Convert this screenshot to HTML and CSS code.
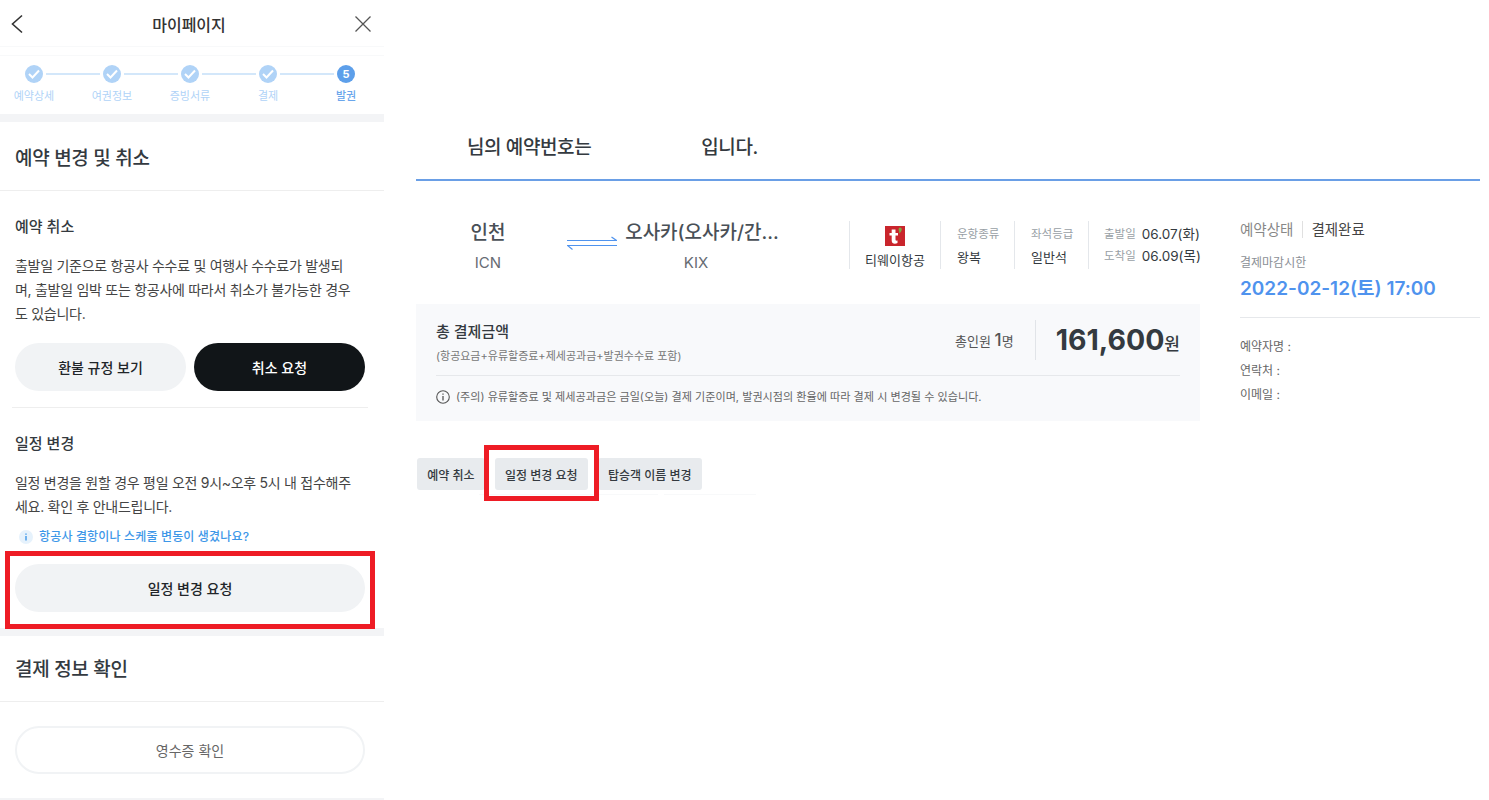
FILE: index.html
```html
<!DOCTYPE html>
<html lang="ko">
<head>
  <meta charset="UTF-8" />
  <title>마이페이지</title>
  <link rel="stylesheet" href="styles.css">
</head>
<body>
  <div class="page">

    <!-- 모바일 마이페이지 -->
    <aside class="mobile">
      <header class="top">
        <svg class="top-icon" width="14" height="20" viewBox="0 0 14 20"><path d="M12 1.500 2.500 10l9.500 8.500" fill="none" stroke="#333" stroke-width="1.600"/></svg>
        <h1>마이페이지</h1>
        <svg class="top-icon" width="18" height="18" viewBox="0 0 18 18"><path d="M1.500 1.500l15 15M16.500 1.500l-15 15" fill="none" stroke="#555" stroke-width="1.300"/></svg>
      </header>

      <ol class="steps">
        <li class="step"><span class="dot"><svg width="12" height="10" viewBox="0 0 12 10"><path d="M1 5l3.500 3.500L11 1.500" fill="none" stroke="#fff" stroke-width="2"/></svg></span><span class="step-name">예약상세</span></li>
        <li class="step"><span class="dot"><svg width="12" height="10" viewBox="0 0 12 10"><path d="M1 5l3.500 3.500L11 1.500" fill="none" stroke="#fff" stroke-width="2"/></svg></span><span class="step-name">여권정보</span></li>
        <li class="step"><span class="dot"><svg width="12" height="10" viewBox="0 0 12 10"><path d="M1 5l3.500 3.500L11 1.500" fill="none" stroke="#fff" stroke-width="2"/></svg></span><span class="step-name">증빙서류</span></li>
        <li class="step"><span class="dot"><svg width="12" height="10" viewBox="0 0 12 10"><path d="M1 5l3.500 3.500L11 1.500" fill="none" stroke="#fff" stroke-width="2"/></svg></span><span class="step-name">결제</span></li>
        <li class="step step-now"><span class="dot">5</span><span class="step-name">발권</span></li>
      </ol>

      <h2 class="block-title">예약 변경 및 취소</h2>

      <section class="block">
        <h3>예약 취소</h3>
        <p>출발일 기준으로 항공사 수수료 및 여행사 수수료가 발생되며, 출발일 임박 또는 항공사에 따라서 취소가 불가능한 경우도 있습니다.</p>
        <div class="btn-row">
          <button class="btn">환불 규정 보기</button>
          <button class="btn btn-dark">취소 요청</button>
        </div>
      </section>

      <section class="block block-change">
        <h3>일정 변경</h3>
        <p>일정 변경을 원할 경우 평일 오전 9시~오후 5시 내 접수해주세요. 확인 후 안내드립니다.</p>
        <div class="notice">
          <svg width="16" height="16" viewBox="0 0 16 16"><circle cx="8" cy="8" r="7" fill="#e6f2fc"/><path d="M8 7v4.500M8 4.500v1.200" stroke="#3d97e8" stroke-width="1.400"/></svg>
          항공사 결항이나 스케줄 변동이 생겼나요?
        </div>
        <button class="btn btn-wide">일정 변경 요청</button>
        <span class="mark mark-side"></span>
      </section>

      <h2 class="block-title block-title-pay">결제 정보 확인</h2>
      <div class="receipt">
        <button class="btn btn-line">영수증 확인</button>
      </div>
    </aside>

    <!-- 예약 상세 -->
    <main class="detail">
      <div class="booking-no">
        <span>님의 예약번호는</span>
        <span>입니다.</span>
      </div>

      <div class="columns">
        <div class="col-main">
          <div class="trip">
            <div class="city city-from"><strong>인천</strong><span>ICN</span></div>
            <svg class="arrows" width="50" height="16" viewBox="0 0 50 16"><path d="M0 4.500h49.500l-5-3.500M50 9.500H.5l5 4" fill="none" stroke="#4f93ee" stroke-width="1.200"/></svg>
            <div class="city city-to"><strong>오사카(오사카/간...</strong><span>KIX</span></div>
            <div class="cell cell-air">
              <svg width="20" height="20" viewBox="0 0 20 20"><rect width="20" height="20" fill="#c9252c"/><path d="M12.500 17c-2.800 1.300-5.800.7-5.800-2.500V9.500H4.500V7h2.200V3.500h3.800V7H13v2.500h-2.500v4c0 1.200 1 1.300 2 1z" fill="#fff"/><path d="M15 1.500c2.500 0 2.500 4-1 6 .8-2-.4-2.500-.4-4 0-1.200.6-2 1.400-2z" fill="#7fa843"/></svg>
              <span class="air-name">티웨이항공</span>
            </div>
            <div class="cell cell-info"><em>운항종류</em><span>왕복</span></div>
            <div class="cell cell-info"><em>좌석등급</em><span>일반석</span></div>
            <div class="cell cell-date">
              <div><em>출발일</em><span>06.07(화)</span></div>
              <div><em>도착일</em><span>06.09(목)</span></div>
            </div>
          </div>

          <div class="pay">
            <div class="pay-top">
              <div class="pay-label">
                <strong>총 결제금액</strong>
                <span>(항공요금+유류할증료+제세공과금+발권수수료 포함)</span>
              </div>
              <div class="pay-count">총인원 <b>1</b>명</div>
              <div class="pay-sum"><b>161,600</b>원</div>
            </div>
            <div class="pay-note">
              <svg width="14" height="14" viewBox="0 0 14 14"><circle cx="7" cy="7" r="6.300" fill="none" stroke="#555" stroke-width="1.100"/><path d="M7 6v4.500M7 3.400v1.400" stroke="#555" stroke-width="1.300"/></svg>
              (주의) 유류할증료 및 제세공과금은 금일(오늘) 결제 기준이며, 발권시점의 환율에 따라 결제 시 변경될 수 있습니다.
            </div>
          </div>

          <div class="tabs">
            <button class="tab">예약 취소</button>
            <button class="tab">일정 변경 요청</button>
            <button class="tab">탑승객 이름 변경</button>
            <span class="mark mark-tab"></span>
          </div>
          <div class="tab-rule"><span></span><span></span></div>
        </div>

        <div class="col-side">
          <div class="status"><span>예약상태</span><b>결제완료</b></div>
          <div class="limit-label">결제마감시한</div>
          <div class="limit-date">2022-02-12(토) 17:00</div>
          <ul class="contact">
            <li>예약자명 :</li>
            <li>연락처 :</li>
            <li>이메일 :</li>
          </ul>
        </div>
      </div>
    </main>
  </div>
</body>
</html>
```
FILE: styles.css
```css
* {
  box-sizing: border-box;
}
body {
  margin: 0;
  background: #fff;
  color: #343a40;
  font-family: Inter, "Noto Sans CJK KR", sans-serif;
}
h1, h2, h3, p, ol, ul {
  margin: 0;
  padding: 0;
  list-style: none;
}
button {
  font-family: inherit;
  border: 0;
  cursor: pointer;
}
em {
  font-style: normal;
}
.page {
  display: flex;
  height: 800px;
  overflow: hidden;
}

/* 왼쪽 모바일 화면 */
.mobile {
  width: 384px;
  flex: none;
}
.top {
  display: flex;
  justify-content: space-between;
  align-items: center;
  height: 47px;
  padding: 2px 12px 0 10px;
  border-bottom: 1px solid #f8f9fa;
}
.top h1 {
  font-size: 16px;
  font-weight: 500;
  color: #333;
}
.steps {
  display: flex;
  height: 59px;
  margin: 8px 0 0 -5px;
  padding: 9px 0 0;
  border-top: 1px solid #f8f9fa;
}
.step {
  position: relative;
  flex: none;
  width: 78px;
  display: flex;
  flex-direction: column;
  align-items: center;
  gap: 5px;
}
.step:not(:last-child)::after {
  content: "";
  position: absolute;
  top: 8px;
  left: 51px;
  width: 54px;
  height: 2px;
  background: #d3e7fa;
}
.dot {
  width: 18px;
  height: 18px;
  border-radius: 50%;
  background: #b0d3f7;
  display: flex;
  align-items: center;
  justify-content: center;
  color: #fff;
  font-size: 11px;
  font-weight: 700;
}
.step-name {
  font-size: 11px;
  line-height: 16px;
  color: #b0d3f7;
}
.step-now .dot {
  background: #5d9fea;
}
.step-now .step-name {
  color: #6aa6ec;
  font-weight: 500;
}
.block-title {
  height: 77px;
  padding: 23px 15px 0;
  border-top: 8px solid #f3f4f6;
  border-bottom: 1px solid #eee;
  font-size: 19px;
  line-height: 28px;
  font-weight: 500;
  letter-spacing: -0.3px;
}
.block {
  position: relative;
  margin: 0 16px 0 12px;
  padding: 24px 3px 16px;
  border-bottom: 1px solid #eee;
}
.block h3 {
  font-size: 15px;
  line-height: 24px;
  font-weight: 500;
  color: #343a40;
}
.block p {
  margin-top: 15px;
  padding-right: 12px;
  font-size: 14px;
  line-height: 24px;
  letter-spacing: -0.28px;
  color: #444;
}
.btn-row {
  display: flex;
  gap: 8px;
  margin-top: 17px;
}
.btn {
  flex: 1;
  height: 48px;
  border-radius: 24px;
  background: #f1f3f5;
  color: #212529;
  font-size: 14px;
  font-weight: 500;
}
.btn-dark {
  background: #111518;
  color: #fff;
}
.block-change {
  height: 220px;
  border-bottom: 0;
}
.notice {
  display: flex;
  align-items: center;
  gap: 5px;
  margin: 10px 0 0 3px;
  font-size: 12px;
  line-height: 16px;
  font-weight: 500;
  letter-spacing: 0.15px;
  color: #3d97e8;
}
.btn-wide {
  display: block;
  width: 100%;
  margin-top: 19px;
}
.block-title-pay {
  height: 74px;
  padding-top: 20px;
}
.receipt {
  height: 98px;
  padding: 24px 19px 24px 15px;
  border-bottom: 2px solid #f3f4f6;
}
.btn-line {
  width: 100%;
  background: #fff;
  border: 2px solid #f1f3f5;
  color: #666;
  font-weight: 400;
}

/* 빨간 표시 박스 */
.mark {
  position: absolute;
  border: 5px solid #ee1c25;
}
.mark-side {
  left: -7px;
  top: 143px;
  width: 370px;
  height: 78px;
}
.mark-tab {
  left: 67px;
  top: -13px;
  width: 115px;
  height: 56px;
}

/* 오른쪽 예약 상세 */
.detail {
  width: 1064px;
  margin-left: 32px;
  padding-top: 125px;
}
.booking-no {
  display: flex;
  gap: 110px;
  height: 56px;
  padding-left: 51px;
  border-bottom: 2px solid #6a9fe6;
  font-size: 19px;
  line-height: 45px;
  font-weight: 500;
  letter-spacing: -0.4px;
  color: #343a40;
}
.columns {
  display: flex;
  gap: 40px;
}
.col-main {
  width: 784px;
  flex: none;
}
.trip {
  display: flex;
  align-items: stretch;
  height: 48px;
  margin-top: 40px;
}
.city {
  display: flex;
  flex-direction: column;
  align-items: center;
  gap: 6px;
  font-size: 15px;
  color: #666c73;
}
.city strong {
  font-size: 19px;
  line-height: 24px;
  font-weight: 500;
  white-space: nowrap;
  color: #495057;
}
.city span {
  line-height: 24px;
}
.city-from {
  width: 144px;
}
.arrows {
  margin: 15px 0 0 7px;
}
.city-to {
  width: 154px;
  margin-left: 8px;
  margin-right: 70px;
}
.city-to span {
  margin-right: 12px;
}
.cell {
  flex: none;
  border-left: 1px solid #e4e7eb;
  font-size: 13px;
  color: #343a40;
}
.cell em {
  color: #999fa6;
  font-size: 11.500px;
  white-space: nowrap;
}
.cell-air {
  width: 91px;
  display: flex;
  flex-direction: column;
  align-items: center;
  padding-top: 5px;
  gap: 5px;
}
.air-name {
  white-space: nowrap;
  line-height: 18px;
}
.cell-info {
  width: 74px;
  display: flex;
  flex-direction: column;
  gap: 5px;
  padding: 4px 0 0 16px;
  line-height: 18px;
}
.cell-date {
  width: 112px;
  padding: 1px 0 0 15px;
}
.cell-date div {
  display: flex;
  gap: 6px;
  align-items: center;
  height: 22px;
}
.cell-date span {
  font-size: 13.500px;
  white-space: nowrap;
}
.pay {
  height: 117px;
  margin-top: 35px;
  padding: 0 20px;
  background: #f8f9fb;
}
.pay-top {
  display: flex;
  align-items: center;
  height: 72px;
  border-bottom: 1px solid #e6e8eb;
}
.pay-label {
  flex: 1;
  display: flex;
  flex-direction: column;
  gap: 5px;
  padding-top: 5px;
}
.pay-label strong {
  font-size: 15px;
  line-height: 22px;
  font-weight: 500;
}
.pay-label span {
  font-size: 11px;
  line-height: 16px;
  color: #777;
}
.pay-count {
  font-size: 13px;
  color: #555;
  padding-right: 21px;
}
.pay-count b {
  font-size: 17px;
  font-weight: 500;
}
.pay-sum {
  height: 40px;
  padding-left: 20px;
  border-left: 1px solid #e1e4e8;
  font-size: 17px;
  line-height: 40px;
  font-weight: 500;
}
.pay-sum b {
  font-size: 28.500px;
  font-weight: 700;
}
.pay-note {
  display: flex;
  align-items: center;
  gap: 6px;
  margin-top: 12px;
  font-size: 11.100px;
  line-height: 18px;
  color: #666;
}
.tabs {
  position: relative;
  display: flex;
  gap: 10px;
  margin-top: 37px;
  margin-left: 1px;
}
.tab {
  height: 32px;
  padding: 0 10.200px;
  border-radius: 3px;
  background: #e8ebee;
  color: #343a40;
  font-size: 12px;
  font-weight: 500;
}
.tab-rule {
  display: flex;
  gap: 6px;
  margin: 4px 0 0 63px;
}
.tab-rule span {
  width: 179px;
  height: 1px;
  background: #f8f9fa;
}
.tab-rule span:last-child {
  width: 92px;
}
.col-side {
  width: 240px;
}
.status {
  display: flex;
  margin-top: 40px;
  font-size: 14.500px;
  color: #888;
}
.status span {
  padding-right: 9px;
  border-right: 1px solid #e0e0e0;
  height: 17px;
  line-height: 17px;
}
.status b {
  padding-left: 8px;
  font-weight: 400;
  color: #444;
  line-height: 17px;
}
.limit-label {
  margin-top: 16px;
  font-size: 12px;
  line-height: 18px;
  color: #8b9096;
}
.limit-date {
  margin-top: 2px;
  padding-bottom: 13px;
  border-bottom: 1px solid #e6e8eb;
  font-size: 19px;
  line-height: 30px;
  font-weight: 600;
  color: #4f93ee;
}
.contact {
  margin-top: 17px;
  font-size: 12px;
  line-height: 24px;
  color: #666;
}
```
